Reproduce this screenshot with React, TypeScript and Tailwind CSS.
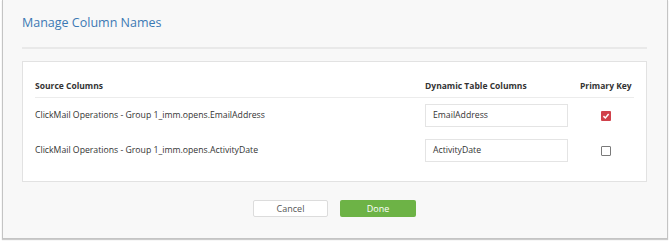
import React from "react";

const rows = [
  {
    id: 1,
    source: "ClickMail Operations - Group 1_imm.opens.EmailAddress",
    name: "EmailAddress",
    primary: true,
  },
  {
    id: 2,
    source: "ClickMail Operations - Group 1_imm.opens.ActivityDate",
    name: "ActivityDate",
    primary: false,
  },
];

const App = () => {
  return (
    <div
      className="w-[670px] h-[241px] bg-white px-[2px] pb-[2px]"
      style={{ fontFamily: '"Open Sans", sans-serif' }}
    >
      <div className="h-full bg-[#f8f8f8] border-l border-r border-b border-[#c4c4c4] shadow-[0_1px_1px_rgba(0,0,0,0.2)] pl-[19px] pr-[20px] pt-[14px]">
        <h1 className="text-[12.5px] leading-[17px] text-[#3c79b4]">Manage Column Names</h1>
        <div className="mt-[16px] h-[2px] bg-[#e9e9e9]" />
        <div className="mt-[12px] h-[121px] bg-white border border-[#e2e2e2] px-[12px] pt-[14px]">
          <div className="flex items-center h-[22px] border-b border-[#ececec] text-[8.5px] font-bold text-[#333]">
            <div className="w-[390px]">Source Columns</div>
            <div className="w-[155px]">Dynamic Table Columns</div>
            <div className="flex-1">Primary Key</div>
          </div>
          {rows.map((row) => (
            <div
              key={row.id}
              className="flex items-center h-[35px] text-[8.7px] text-[#333] first:mt-[1px]"
            >
              <div className="w-[390px]">{row.source}</div>
              <div className="w-[155px]">
                <div className="w-[143px] h-[23px] border border-[#e4e4e4] bg-white flex items-center pl-[7px]">
                  {row.name}
                </div>
              </div>
              <div className="w-[53px] flex justify-center pr-[2px]">
                {row.primary ? (
                  <span className="w-[10px] h-[10px] bg-[#d0414b] rounded-[1px] flex items-center justify-center">
                    <svg width="8" height="8" viewBox="0 0 10 10">
                      <path d="M1.8 5.2 L4.2 7.5 L8.3 2.6" stroke="#fff" strokeWidth="1.9" fill="none" />
                    </svg>
                  </span>
                ) : (
                  <span className="w-[10px] h-[10px] border-[1.5px] border-[#7a7a7a] rounded-[1px] bg-white" />
                )}
              </div>
            </div>
          ))}
        </div>
        <div className="flex justify-center gap-[12px] mt-[18px]">
          <button className="w-[75px] h-[17px] bg-white border border-[#dcdcdc] rounded-[2px] text-[9px] leading-none text-[#555]">
            Cancel
          </button>
          <button className="w-[76px] h-[17px] bg-[#6db346] rounded-[2px] text-[9px] leading-none text-white">
            Done
          </button>
        </div>
      </div>
    </div>
  );
};

export default App;
